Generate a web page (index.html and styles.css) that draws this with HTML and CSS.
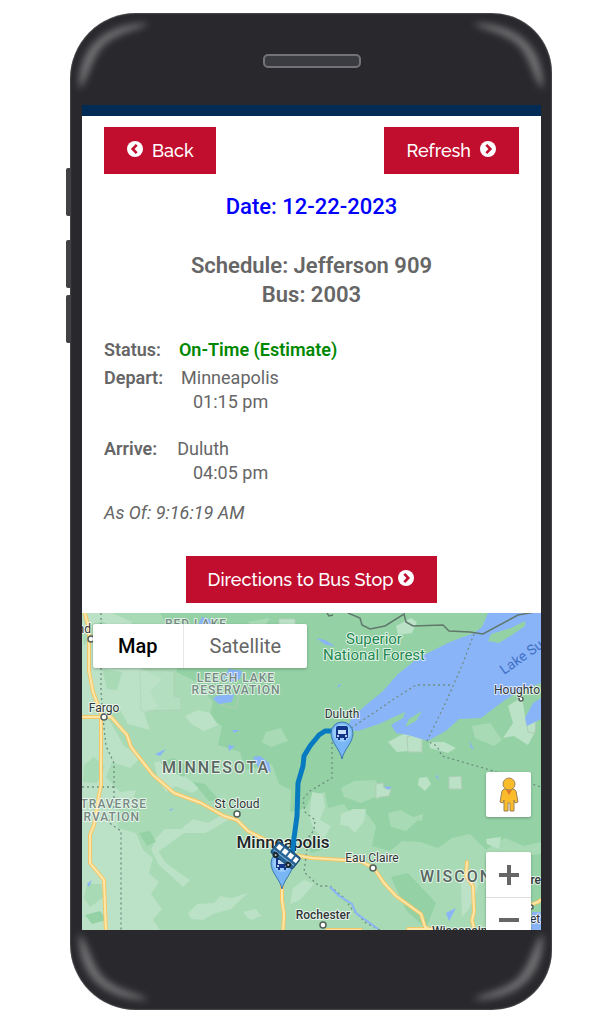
FILE: index.html
```
<!DOCTYPE html>
<html lang="en">
<head>
<meta charset="utf-8">
<title>Bus Status</title>
<link rel="stylesheet" href="styles.css">
</head>
<body>
<svg class="defs" width="0" height="0" aria-hidden="true">
  <defs>
    <filter id="soft" x="-20%" y="-20%" width="140%" height="140%"><feGaussianBlur stdDeviation="3.5"/></filter>
    <g id="shine"><path d="M9 76C8 36 32 11 78 10C74 16 48 18 33 33C20 48 18 68 9 76Z" fill="#737376" filter="url(#soft)"/></g>
    <g id="chevron-right"><circle cx="9" cy="9" r="8" fill="#fff"/><path d="M7.300 4.800L11.300 9L7.300 13.200" fill="none" stroke="#c10e2f" stroke-width="2.600"/></g>
    <g id="pin">
      <path d="M0 26C-2 16-11 10-11 0A11 11 0 0 1 11 0C11 10 2 16 0 26Z" fill="#78b6f5" stroke="#3b78ae" stroke-width="1"/>
      <circle r="9" fill="#9bcbf9"/>
      <path d="M-6-5Q-6-7-4-7H4Q6-7 6-5V5H4V7H2V5H-2V7H-4V5H-6Z" fill="#12358c"/>
      <path d="M-4-3H4V1H-4Z" fill="#c9e1fb"/><circle cx="-4" cy="3" r="1" fill="#fff"/><circle cx="4" cy="3" r="1" fill="#fff"/>
    </g>
  </defs>
</svg>
<main class="phone">
  <svg class="shine tl" viewBox="0 0 90 84" aria-hidden="true"><use href="#shine"/></svg>
  <svg class="shine tr" viewBox="0 0 90 84" aria-hidden="true"><use href="#shine"/></svg>
  <svg class="shine bl" viewBox="0 0 90 84" aria-hidden="true"><use href="#shine"/></svg>
  <svg class="shine br" viewBox="0 0 90 84" aria-hidden="true"><use href="#shine"/></svg>
  <div class="side-keys"><i></i><i></i><i></i></div>
  <div class="earpiece"><span class="speaker"></span></div>
  <div class="screen">
    <section class="details">
      <nav class="toolbar">
        <button class="btn" type="button"><svg class="icon flip" viewBox="0 0 18 18" aria-hidden="true"><use href="#chevron-right"/></svg><span>Back</span></button>
        <button class="btn" type="button"><span>Refresh</span><svg class="icon" viewBox="0 0 18 18" aria-hidden="true"><use href="#chevron-right"/></svg></button>
      </nav>
      <h1 class="date">Date: 12-22-2023</h1>
      <h2 class="schedule">Schedule: Jefferson 909<br>Bus: 2003</h2>
      <dl class="trip">
        <div class="row status"><dt>Status:</dt><dd>On-Time (Estimate)</dd></div>
        <div class="row"><dt>Depart:</dt><dd>Minneapolis</dd></div>
        <dd class="time">01:15 pm</dd>
        <div class="row arrive"><dt>Arrive:</dt><dd>Duluth</dd></div>
        <dd class="time">04:05 pm</dd>
      </dl>
      <p class="as-of">As Of: 9:16:19 AM</p>
      <button class="btn directions" type="button"><span>Directions to Bus Stop</span><svg class="icon" viewBox="0 0 18 18" aria-hidden="true"><use href="#chevron-right"/></svg></button>
    </section>
    <section class="map" aria-label="Route map">
      <svg class="map-art" viewBox="82 613 459 317" preserveAspectRatio="xMidYMid slice">
        <rect x="82" y="613" width="459" height="317" fill="#94d2a5"/>
        <path fill="#a8dab5" d="M82 613H160L170 630L188 645L176 672L197 682L213 702L209 718L222 726L218 745L240 752L245 770L272 764L279 784L291 790L290 812L306 808L312 795L325 792L328 808L344 804L352 816L364 810L376 826L372 846L390 851L402 841L420 842L438 848L452 838L470 834L486 850L505 838L524 846L541 842V930H82Z"/>
        <g fill="#bbe2c6">
          <path d="M82 613H112L132 622L129 640L145 655L140 668L162 679L150 692L158 707L144 713L150 730L128 724L118 706L108 718L123 744L140 758L130 768L112 762L106 777L120 792L136 790L132 805L116 808L118 828L136 833L143 850L153 858L149 873L159 882L151 894L162 909L153 920L160 930H82Z"/>
          <path d="M154 762L170 760L183 775L200 788L192 793L176 786L166 792L158 779Z"/>
          <path d="M165 829L181 829L193 819L208 823L223 814L231 818L213 829L205 833L184 833L158 852L152 842Z"/>
          <path d="M154 844L165 862L178 872L190 880L183 887L170 875L159 865L151 849Z"/>
          <path d="M188 913L197 904L214 903L220 896L231 898L248 893L231 909L213 914L203 920L191 919Z"/>
          <path d="M185 716L198 710L210 713L218 725L204 731L191 724Z"/>
          <path d="M243 912L256 909L261 916L251 920L247 917Z"/>
          <path d="M293 888L304 880L314 884L300 900L290 904Z"/>
          <path d="M396 626L411 618L417 622L412 633L398 635Z"/>
          <path d="M388 742L405 733L417 735L409 751L397 752Z"/><path d="M429 742L444 742L456 748L448 753L430 748Z"/>
          <path d="M508 706L522 697L525 716L535 732L528 745L514 736L503 738L513 723Z"/>
          <path d="M419 778L427 777L431 784L425 791L418 785Z"/><path d="M486 839L501 837L499 849L487 844Z"/>
          <path d="M341 814L353 809L366 809L364 821L355 833L348 826L340 825Z"/>
          <path d="M312 792L323 794L325 807L320 820L331 826L324 839L314 829L309 817Z"/>
          <path d="M461 882L471 869L479 884L469 909L462 917Z"/>
        </g>
        <g fill="#a8dab5">
          <path d="M82 627L102 621L119 632L110 643L97 635L84 645Z"/><path d="M102 669L122 672L117 690L107 689Z"/>
          <path d="M122 745L151 739L170 747L153 759L139 754Z"/><path d="M84 765L94 757L105 766L97 783L83 782Z"/>
          <path d="M87 884L101 884L104 897L90 907L84 898Z"/><path d="M201 638L225 635L249 646L239 659L219 654L211 664Z"/>
          <path d="M247 622L270 618L261 632Z"/><path d="M266 732L281 728L288 741L271 747L262 742Z"/>
          <path d="M341 788L354 781L376 780L380 795L361 803L344 797Z"/><path d="M388 813L401 810L418 820L406 831L391 827Z"/>
          <path d="M410 818L423 814L422 821Z"/>
          <path d="M472 726L490 723L502 740L494 746L475 738Z"/>
        </g>
        <g fill="#94d2a5">
          <path d="M160 762L174 758L190 768L183 777L169 770Z"/><path d="M193 782L205 784L219 800L209 801Z"/>
          <path d="M139 833L150 831L156 842L147 846Z"/><path d="M85 915L100 911L107 920L92 924Z"/>
          <path d="M307 842L319 839L324 849L311 853Z"/><path d="M391 877L408 873L436 903L426 929L406 910Z"/>
          <path d="M485 860L541 854V930H486Z"/>
        </g>
        <g fill="#bbe2c6" stroke="#b0cdb7" stroke-width="1">
          <path d="M140 670L174 671V696L181 698V710L141 711Z" opacity=".6"/><path d="M279 619H295V629H279Z"/><path d="M376 784L383 783L384 788L391 789L389 796L380 797L376 799Z"/>
          <path d="M449 777L461 776L462 789H449Z"/><path d="M407 737L415 734L422 739V752H408Z"/><path d="M526 720L536 719L535 733L528 732Z"/>
          <path d="M240 689L236 709L220 704L213 698" fill="none"/>
        </g>
        <g fill="#8ab4f8">
          <path d="M541 613H488L482 627L474 633L450 642L418 658L398 674L382 692L366 705L353 717L345 729L358 731L379 724L405 712L403 718L391 725L396 733L408 735L428 741L447 730L459 719L481 718L505 700L520 691L541 683Z"/>
          <path d="M541 698L533 703L525 718L527 726L541 719Z"/>
          <path d="M202 617L209 619L214 626L198 625Z"/><path d="M229 669L242 671L240 679L228 683L230 674L221 681Z"/>
          <path d="M216 696L234 694L232 702L219 704L213 699Z"/><path d="M253 757L260 756L269 763L271 772L259 769Z"/>
          <path d="M155 754L166 749L160 756Z"/><path d="M232 730L240 730L234 733Z"/><path d="M228 745L235 746L229 751Z"/>
          <path d="M169 810L174 808L171 811Z"/><path d="M87 884L92 880L89 887Z"/><path d="M316 638L325 640L335 646L326 645Z"/>
          <path d="M384 786L392 787L388 790Z"/><path d="M446 913L456 908L449 921Z"/><path d="M437 774L439 780L436 777Z"/>
          <path d="M469 740L474 750L471 748Z"/><path d="M337 687L341 683L340 687Z"/><path d="M532 912H541V930H531Z"/>
        </g>
        <path fill="#94d2a5" d="M488 641L491 634L511 628L525 621L525 626L512 635L499 643Z"/>
        <path fill="#94d2a5" d="M409 719L422 711L416 721L405 727Z"/>
        <g fill="none" stroke="#6f8d80" stroke-width="1.300" stroke-dasharray="2 3">
          <path d="M101 613L101 690L103 718L106 746L114 763L114 786L114 812L108 822L121 831V930"/><path d="M82 787H114"/>
          <path d="M474 634L461 668L445 704L427 741L437 746L442 756L490 770L541 787"/><path d="M351 728L375 712L397 697L416 685H451"/>
          <path d="M332 742V778L310 791L303 799L305 812L315 820L314 830L308 838M307 849L304 872L319 886L330 886L343 897L352 909L366 923L380 930"/>
        </g>
        <path d="M330 887L338 895L352 904L356 913L378 929" fill="none" stroke="#8ab4f8" stroke-width="2"/>
        <path d="M327 613L329 616L333 615M348 613L360 618L362 625L370 629L385 626L404 614L406 622L413 626L443 625L449 631L470 632L483 634L518 615L541 611" fill="none" stroke="#61786c" stroke-width="1.500"/>
        <g fill="none" stroke-linejoin="round" stroke-linecap="round">
          <g class="road-edge">
            <path id="roads" d="M84 610L89 629V671L93 692L101 713V785L99 795L94 825L90 835V863L104 880L106 933M79 717H111L127 735L131 747L153 775L174 793L201 803L224 816L237 820L248 831L270 842L288 854L312 858L360 861L374 868L384 883L396 896L421 914L425 927L435 932M282 850V900L284 914L283 933M467 862L466 876L473 886L474 912L472 920L475 933M327 930H361M408 929H435M530 905L538 902L545 897"/>
          </g>
          <use href="#roads" class="road-core"/>
        </g>
        <g fill="#fff" stroke="#55605a" stroke-width="1.500"><circle cx="91" cy="639" r="3"/><circle cx="104" cy="717" r="3"/><circle cx="237" cy="814" r="3"/><circle cx="373" cy="868" r="3"/><circle cx="323" cy="925" r="3"/><circle cx="521" cy="699" r="2"/><circle cx="531" cy="907" r="2"/></g>
        <g class="labels" text-anchor="middle">
          <g class="area"><text x="196" y="628">RED LAKE</text><text x="236" y="682">LEECH LAKE</text><text x="236" y="694">RESERVATION</text><text x="147" y="808" text-anchor="end">TRAVERSE</text><text x="140" y="821" text-anchor="end">RVATION</text></g>
          <g class="state"><text x="216" y="773">MINNESOTA</text><text x="420" y="882" text-anchor="start">WISCON</text></g>
          <g class="forest"><text x="374" y="644">Superior</text><text x="374" y="660">National Forest</text></g>
          <g class="town"><text x="104" y="712">Fargo</text><text x="342" y="718">Duluth</text><text x="237" y="808">St Cloud</text><text x="372" y="862">Eau Claire</text><text x="323" y="919" class="strong">Rochester</text><text x="494" y="694" text-anchor="start">Houghto</text><text x="91" y="633" text-anchor="end">nd</text><text x="541" y="884" text-anchor="end" class="strong">re</text><text x="530" y="923" text-anchor="start">et</text><text x="432" y="935" text-anchor="start" class="strong">Wisconsin</text></g>
          <text class="city" x="283" y="848">Minneapolis</text>
          <text class="lake" text-anchor="start" transform="translate(504 675) rotate(-35)">Lake Su</text>
        </g>
        <path d="M335 731H325L319 735L310 746L304 756L303 766L298 783L297 816L294 838L292 855" fill="none" stroke="#087abf" stroke-width="5" stroke-linejoin="round"/>
        <use href="#pin" x="342" y="733"/>
        <use href="#pin" x="282" y="863"/>
        <g transform="translate(285 856) rotate(38)">
          <rect x="-14" y="-8" width="28" height="14" rx="2" fill="#286596" stroke="#174b73"/>
          <path d="M-12-6H-7V-1H-12ZM-5-6H0V-1H-5ZM2-6H7V-1H2ZM9-6H13V-1H9Z" fill="#fff"/>
          <path d="M-13 2H13" stroke="#80b6dd"/>
          <g fill="#bcc7cd" stroke="#1b2830" stroke-width="2"><circle cx="-8" cy="5" r="2"/><circle cx="8" cy="5" r="2"/></g>
        </g>
      </svg>
      <div class="map-type"><button type="button" class="active">Map</button><button type="button">Satellite</button></div>
      <div class="map-controls">
        <button type="button" class="pegman" aria-label="Street View"><svg viewBox="0 0 24 36" aria-hidden="true"><g fill="#fbbc2b" stroke="#9c8359" stroke-width="1"><path d="M7 12H17L19 14L21 25L18 26L17 23V34H13V26H11V34H7V23L6 26L3 25L5 14Z"/><circle cx="12" cy="7" r="6"/></g><path d="M9 13H15L12 18Z" fill="#e07a2c"/></svg></button>
        <div class="zoom"><button type="button" aria-label="Zoom in"><svg viewBox="0 0 20 20" aria-hidden="true"><path d="M0 10H20M10 0V20" stroke="#666" stroke-width="4"/></svg></button><button type="button" aria-label="Zoom out"><svg viewBox="0 0 20 20" aria-hidden="true"><path d="M0 10H20" stroke="#666" stroke-width="4"/></svg></button></div>
      </div>
    </section>
  </div>
</main>
</body>
</html>
```
FILE: styles.css
```
* { box-sizing: border-box; }
body { margin: 0; padding: 13px 62px 14px 70px; background: #fff; color: #666; font: 18px/24px Roboto, "Noto Sans", sans-serif; }
button { font: inherit; border: 0; cursor: pointer; }
h1, h2, p, dl, dt, dd { margin: 0; }
.defs { position: absolute; }
.phone { position: relative; padding: 0 11px 80px 12px; background: #29282c; border-radius: 66px 60px 60px 66px; box-shadow: inset 0 0 2px #888; }
.shine { position: absolute; width: 90px; height: 84px; }
.tl { top: 0; left: 0; }
.tr { top: 0; right: 0; transform: scaleX(-1); }
.bl { bottom: 0; left: 0; transform: scaleY(-1); }
.br { bottom: 0; right: 0; transform: scale(-1); }
.side-keys { position: absolute; left: -4px; top: 155px; display: flex; flex-direction: column; gap: 7px; }
.side-keys i { width: 4px; height: 48px; background: #414144; border-radius: 2px 0 0 2px; }
.side-keys i:first-child { margin-bottom: 17px; }
.earpiece { display: flex; justify-content: center; padding: 41px 0 37px; }
.speaker { width: 98px; height: 14px; background: #3b3c41; border: 2px solid #737377; border-radius: 5px; }
.screen { position: relative; background: #fff; border-top: 11px solid #002b55; }
.details { display: flex; flex-direction: column; padding: 11px 22px 10px; }
.toolbar { display: flex; justify-content: space-between; }
.btn { display: flex; align-items: center; gap: 8px; height: 47px; padding: 0 22px; color: #fff; background: #c10e2f; font: 500 18px/24px Raleway, Lato, sans-serif; }
.icon { width: 18px; height: 18px; margin-bottom: 4px; }
.flip { transform: scaleX(-1); }
.date { margin-top: 18px; text-align: center; font-size: 22px; line-height: 30px; font-weight: 500; color: #00f; }
.schedule { margin-top: 29px; text-align: center; font-size: 22px; line-height: 29px; font-weight: 600; }
.trip { margin-top: 29px; }
.row { display: flex; gap: 18px; }
.row dt { font-weight: 600; }
.status { margin-bottom: 4px; }
.status dd { color: #008800; font-weight: 600; }
.arrive { gap: 20px; margin-top: 23px; }
.time { padding-left: 89px; }
.as-of { margin-top: 16px; font-style: italic; }
.directions { align-self: center; gap: 4px; margin-top: 31px; }
.map { position: relative; height: 317px; overflow: hidden; }
.map-art { display: block; width: 100%; height: 100%; }
.road-edge { stroke: #f3c667; stroke-width: 4px; }
.road-core { stroke: #fde7a8; stroke-width: 2px; }
.labels text { paint-order: stroke; stroke: #ffffffbb; stroke-width: 2px; stroke-linejoin: round; font-family: Roboto, sans-serif; }
.area { font-size: 12px; font-weight: 500; letter-spacing: 1px; fill: #758a82; }
.state { font-size: 16px; font-weight: 500; letter-spacing: 2px; fill: #596761; }
.forest { font-size: 15px; fill: #228750; }
.town { font-size: 12px; fill: #303638; }
.strong { font-weight: 500; }
.city { font-size: 17px; font-weight: 500; fill: #202427; }
.labels .lake { font-size: 14px; fill: #3f70c7; stroke: none; }
.map-type { position: absolute; top: 11px; left: 11px; display: flex; background: #fff; border-radius: 2px; box-shadow: 0 1px 3px #0004; }
.map-type button { height: 44px; padding: 0 26px; background: none; color: #666; font-size: 20px; }
.map-type .active { padding: 0 25px; color: #000; font-weight: 500; border-right: 1px solid #e6e6e6; }
.map-controls { position: absolute; top: 159px; right: 10px; display: flex; flex-direction: column; gap: 35px; width: 45px; }
.pegman, .zoom { background: #fff; border-radius: 2px; box-shadow: 0 1px 3px #0004; }
.pegman, .zoom button { display: flex; align-items: center; justify-content: center; width: 100%; height: 45px; padding: 0; }
.pegman svg { width: 24px; height: 36px; }
.zoom button { background: none; }
.zoom button + button { border-top: 1px solid #ddd; }
.zoom svg { width: 20px; height: 20px; }
```
